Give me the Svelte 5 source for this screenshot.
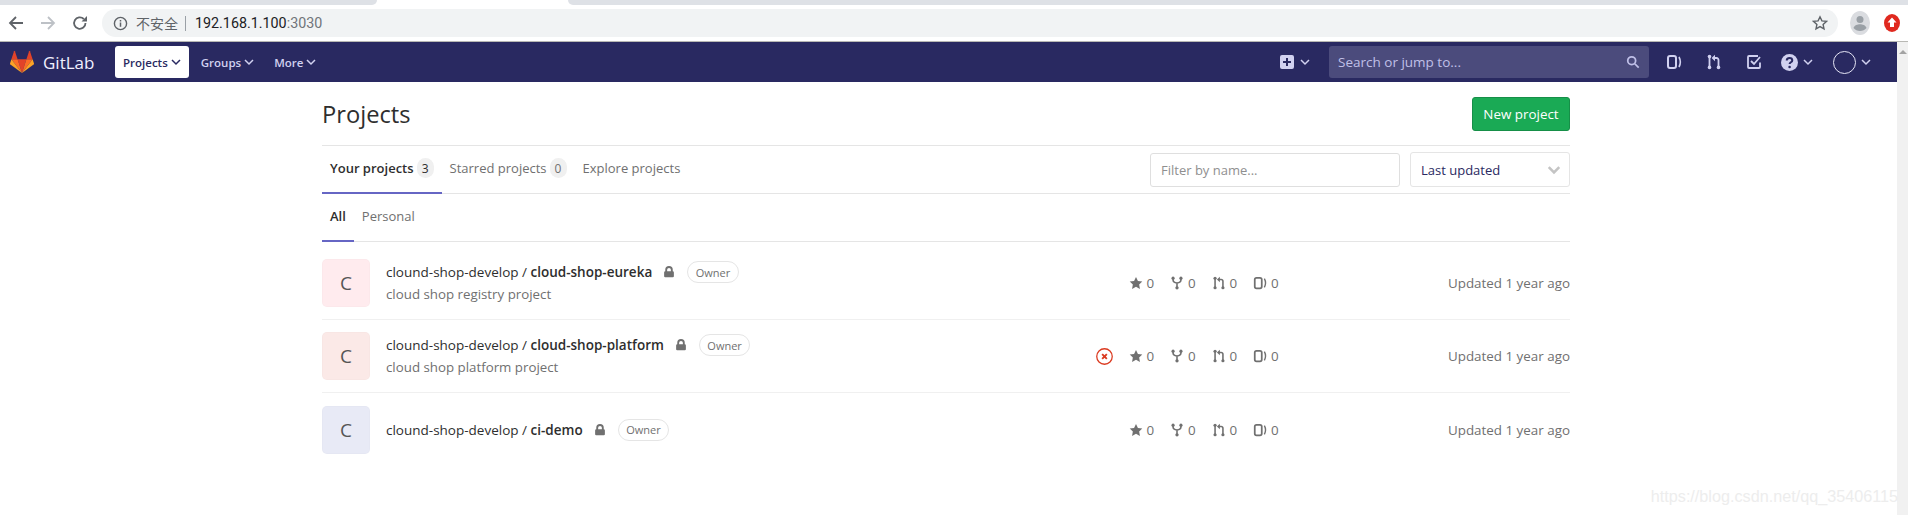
<script>
  const projects = [
    { name: 'cloud-shop-eureka', desc: 'cloud shop registry project', tint: 'pink' },
    { name: 'cloud-shop-platform', desc: 'cloud shop platform project', tint: 'rose', failed: true },
    { name: 'ci-demo', desc: '', tint: 'indigo' }
  ];
</script>

{#snippet chevron()}
  <svg class="chev" viewBox="0 0 10 10"><path d="M1 3l4 4 4-4" fill="none" stroke="currentColor" stroke-width="1.500" /></svg>
{/snippet}

{#snippet issuesIcon()}
  <svg class="icon" viewBox="0 0 16 16" fill="none" stroke="currentColor" stroke-width="2">
    <rect x="2" y="2" width="8" height="12" rx="2" />
    <path d="M13 3c1.600 3 1.600 7 0 10" stroke-width="1.600" />
  </svg>
{/snippet}

{#snippet mrIcon()}
  <svg class="icon" viewBox="0 0 16 16" fill="none" stroke="currentColor" stroke-width="1.800">
    <path d="M3.500 3v10M12.500 13V6c0-1.200-.8-2-2-2H8" />
    <path d="M9 .8 5.600 4 9 7.200z" fill="currentColor" stroke="none" />
    <circle cx="3.500" cy="2.600" r="1.800" fill="currentColor" stroke="none" />
    <circle cx="3.500" cy="13.400" r="1.800" fill="currentColor" stroke="none" />
    <circle cx="12.500" cy="13.400" r="1.800" fill="currentColor" stroke="none" />
  </svg>
{/snippet}

{#snippet forkIcon()}
  <svg class="icon" viewBox="0 0 16 16" fill="none" stroke="currentColor" stroke-width="1.800">
    <path d="M3.500 2.500v2c0 2 1.500 3 4.500 3.500 3-.5 4.500-1.500 4.500-3.500v-2M8 8v5" />
    <circle cx="3.500" cy="2.500" r="1.800" fill="currentColor" stroke="none" />
    <circle cx="12.500" cy="2.500" r="1.800" fill="currentColor" stroke="none" />
    <circle cx="8" cy="13.500" r="1.900" fill="currentColor" stroke="none" />
  </svg>
{/snippet}

<div class="screen">
  <div class="tabstrip">
    <div class="tab-gray left"></div>
    <div class="tab-open"></div>
    <div class="tab-gray right"></div>
  </div>

  <div class="toolbar">
    <svg class="tool" viewBox="0 0 16 16" fill="none" stroke="#5f6368" stroke-width="1.800"><path d="M15 8H2M8 2 2 8l6 6" /></svg>
    <svg class="tool" viewBox="0 0 16 16" fill="none" stroke="#bdc1c6" stroke-width="1.800"><path d="M1 8h13M8 2l6 6-6 6" /></svg>
    <svg class="tool" viewBox="0 0 16 16" fill="none" stroke="#5f6368" stroke-width="1.800"><path d="M13.500 8a5.700 5.700 0 1 1-1.700-4" /><path d="M15 1v5.500H9.500z" fill="#5f6368" stroke="none" /></svg>
    <div class="omnibox">
      <svg class="info" viewBox="0 0 16 16"><circle cx="8" cy="8" r="6.500" fill="none" stroke="#5f6368" stroke-width="1.500" /><path d="M7.200 7h1.600v4.500H7.200zM7.200 4.200h1.600v1.600H7.200z" fill="#5f6368" /></svg>
      <span class="insecure">不安全</span>
      <span class="sep"></span>
      <span class="url">192.168.1.100<span class="port">:3030</span></span>
      <svg class="bookmark" viewBox="0 0 16 16"><path d="M8 1.800l1.900 4.100 4.500.5-3.300 3 .9 4.500L8 11.600l-4 2.300.9-4.500-3.300-3 4.500-.5z" fill="none" stroke="#5f6368" stroke-width="1.400" /></svg>
    </div>
    <svg class="profile" viewBox="0 0 20 24"><ellipse cx="10" cy="12" rx="10" ry="12" fill="#dadce0" /><circle cx="10" cy="8.500" r="3.500" fill="#9aa0a6" /><path d="M3.500 17c1-3 4-3.800 6.500-3.800s5.500.8 6.500 3.800c-1.500 2-4 3-6.500 3s-5-1-6.500-3z" fill="#9aa0a6" /></svg>
    <svg class="ext" viewBox="0 0 16 18"><ellipse cx="8" cy="9" rx="8" ry="9" fill="#e0291f" /><path d="M8 3.500 12.500 8.500H10V13H6V8.500H3.500z" fill="#fff" /></svg>
  </div>

  <div class="viewport">
    <div class="page">
      <nav class="navbar">
        <svg class="logo" viewBox="0 0 36 36">
          <path d="M18 34.380 24.630 13.990H11.370z" fill="#e24329" />
          <path d="M18 34.380 11.370 13.990H2.080z" fill="#fc6d26" />
          <path d="M2.080 14 .06 20.190a1.380 1.380 0 0 0 .5 1.540L18 34.380z" fill="#fca326" />
          <path d="M2.080 14h9.290L7.380 1.720a.69.69 0 0 0-1.310 0z" fill="#e24329" />
          <path d="M18 34.380 24.630 13.990H33.920z" fill="#fc6d26" />
          <path d="M33.920 14l2.020 6.190a1.380 1.380 0 0 1-.5 1.540L18 34.380z" fill="#fca326" />
          <path d="M33.920 14h-9.290l3.990-12.280a.69.69 0 0 1 1.310 0z" fill="#e24329" />
        </svg>
        <span class="brand">GitLab</span>
        <div class="menu">
          <span class="menu-item active">Projects {@render chevron()}</span>
          <span class="menu-item">Groups {@render chevron()}</span>
          <span class="menu-item">More {@render chevron()}</span>
        </div>
        <div class="nav-right">
          <span class="nav-icon plus">
            <svg class="icon" viewBox="0 0 16 16"><path fill-rule="evenodd" d="M3 1h10a2 2 0 0 1 2 2v10a2 2 0 0 1-2 2H3a2 2 0 0 1-2-2V3a2 2 0 0 1 2-2zm4 3v3H4v2h3v3h2V9h3V7H9V4z" fill="currentColor" /></svg>
            {@render chevron()}
          </span>
          <div class="search">
            <span>Search or jump to...</span>
            <svg class="icon" viewBox="0 0 16 16" fill="none" stroke="currentColor" stroke-width="2"><circle cx="6.500" cy="6.500" r="4.500" /><path d="M10 10l4.500 4.500" /></svg>
          </div>
          <span class="nav-icon issues">{@render issuesIcon()}</span>
          <span class="nav-icon mr">{@render mrIcon()}</span>
          <span class="nav-icon todo">
            <svg class="icon" viewBox="0 0 16 16" fill="none" stroke="currentColor" stroke-width="1.800"><path d="M14 8.500V13a1 1 0 0 1-1 1H3a1 1 0 0 1-1-1V3a1 1 0 0 1 1-1h9" /><path d="M5 7l3 3 6-7" /></svg>
          </span>
          <span class="nav-icon help">
            <svg class="help-icon" viewBox="0 0 16 16"><circle cx="8" cy="8" r="8" fill="currentColor" /><path d="M5.400 6.200c0-1.500 1.100-2.400 2.600-2.400s2.600.9 2.600 2.200c0 1.800-2.500 1.800-2.500 3.500" fill="none" stroke="#292961" stroke-width="1.900" /><circle cx="8.100" cy="12.200" r="1.200" fill="#292961" /></svg>
            {@render chevron()}
          </span>
          <span class="nav-icon user">
            <span class="user-circle"></span>
            {@render chevron()}
          </span>
        </div>
      </nav>

      <main class="content">
        <header class="head">
          <h1>Projects</h1>
          <span class="btn-new">New project</span>
        </header>

        <div class="tabs">
          <span class="tab current">Your projects <span class="count">3</span></span>
          <span class="tab">Starred projects <span class="count">0</span></span>
          <span class="tab">Explore projects</span>
          <div class="filters">
            <input class="filter" placeholder="Filter by name..." />
            <div class="sort">
              <span>Last updated</span>
              <svg viewBox="0 0 12 12"><path d="M1.500 3.500 6 8l4.500-4.500" fill="none" stroke="#c4c4c4" stroke-width="2.200" /></svg>
            </div>
          </div>
        </div>

        <div class="subtabs">
          <span class="subtab current">All</span>
          <span class="subtab">Personal</span>
        </div>

        <ul class="list">
          {#each projects as p}
            <li class="row">
              <div class="avatar {p.tint}">C</div>
              <div class="info-col">
                <div class="title">
                  <span class="path">clound-shop-develop / <b>{p.name}</b></span>
                  <svg class="lock" viewBox="0 0 16 16"><path fill-rule="evenodd" d="M3 7V5a5 5 0 0 1 10 0v2a1.500 1.500 0 0 1 1.500 1.500v5A1.500 1.500 0 0 1 13 15H3a1.500 1.500 0 0 1-1.500-1.500v-5A1.500 1.500 0 0 1 3 7zm2.500 0h5V5a2.500 2.500 0 0 0-5 0z" fill="#707070" /></svg>
                  <span class="role">Owner</span>
                </div>
                {#if p.desc}<div class="desc">{p.desc}</div>{/if}
              </div>
              {#if p.failed}
                <svg class="ci" viewBox="0 0 16 16"><circle cx="8" cy="8" r="7.300" fill="none" stroke="#db3b21" stroke-width="1.200" /><path d="M5.800 5.800l4.400 4.400M10.200 5.800l-4.400 4.400" stroke="#db3b21" stroke-width="1.800" /></svg>
              {/if}
              <div class="stats">
                <span class="stat"><svg class="icon" viewBox="0 0 16 16"><path d="M8 1l2.200 4.600 5 .7-3.600 3.500.9 5L8 12.400l-4.500 2.400.9-5L.8 6.300l5-.7z" fill="currentColor" /></svg> 0</span>
                <span class="stat">{@render forkIcon()} 0</span>
                <span class="stat">{@render mrIcon()} 0</span>
                <span class="stat last">{@render issuesIcon()} 0</span>
              </div>
              <div class="updated">Updated 1 year ago</div>
            </li>
          {/each}
        </ul>
      </main>
    </div>
    <div class="scrollbar"><span class="arrow"></span></div>
  </div>

  <div class="watermark">https://blog.csdn.net/qq_35406115</div>
</div>

<style>
  :global(body) {
    margin: 0;
    background: #fff;
  }

  .screen {
    position: relative;
    width: 1908px;
    height: 515px;
    overflow: hidden;
    display: flex;
    flex-direction: column;
    font-family: "Open Sans", "Noto Sans CJK SC", sans-serif;
    color: #2e2e2e;
  }

  .tabstrip {
    display: flex;
    height: 5px;
    flex-shrink: 0;
  }

  .tab-gray {
    background: #dee1e6;
  }

  .tab-gray.left {
    width: 377px;
    border-bottom-right-radius: 5px;
  }

  .tab-open {
    width: 191px;
  }

  .tab-gray.right {
    flex: 1;
    border-bottom-left-radius: 5px;
  }

  .toolbar {
    height: 36px;
    flex-shrink: 0;
    display: flex;
    align-items: center;
    padding-left: 8px;
    border-bottom: 1px solid #b8b8b4;
  }

  .tool {
    width: 16px;
    height: 16px;
    margin-right: 16px;
    flex-shrink: 0;
  }

  .omnibox {
    width: 1736px;
    margin-left: -2px;
    height: 28px;
    box-sizing: border-box;
    background: #f1f3f4;
    border-radius: 14px;
    display: flex;
    align-items: center;
    padding: 0 10px 0 11px;
    font-family: Roboto, "Noto Sans CJK SC", sans-serif;
    font-size: 14.300px;
  }

  .info {
    width: 15px;
    height: 15px;
    margin-right: 8px;
  }

  .insecure {
    color: #5f6368;
    font-size: 14px;
  }

  .sep {
    width: 1px;
    height: 15px;
    background: #9aa0a6;
    margin: 0 9px 0 7px;
  }

  .url {
    color: #202124;
  }

  .port {
    color: #70757a;
  }

  .bookmark {
    width: 16px;
    height: 16px;
    margin-left: auto;
  }

  .profile {
    width: 20px;
    height: 24px;
    margin-left: 12px;
  }

  .ext {
    width: 16px;
    height: 18px;
    margin-left: 14px;
  }

  .viewport {
    flex: 1;
    display: flex;
    min-height: 0;
  }

  .page {
    flex: 1;
    min-width: 0;
  }

  .scrollbar {
    width: 11px;
    background: #f1f1f1;
    display: flex;
    justify-content: center;
    align-items: flex-start;
    padding-top: 8px;
    box-sizing: border-box;
  }

  .arrow {
    width: 0;
    height: 0;
    border: 4px solid transparent;
    border-top: 0;
    border-bottom: 4px solid #a3a3a3;
  }

  .navbar {
    height: 40px;
    background: #292961;
    display: flex;
    align-items: center;
    padding-left: 10px;
    color: #d1d1f0;
  }

  .logo {
    width: 24px;
    height: 24px;
    margin-right: 9px;
  }

  .brand {
    font-size: 17px;
    color: #f0f0ff;
    width: 72px;
  }

  .menu {
    display: flex;
    align-items: center;
  }

  .menu-item {
    display: flex;
    align-items: center;
    gap: 3px;
    height: 32px;
    padding: 0 8px;
    font-size: 11.500px;
    font-weight: 600;
    border-radius: 3px;
    margin-right: 4px;
    color: #d1d1f0;
  }

  .menu-item.active {
    background: #fff;
    color: #292961;
  }

  .chev {
    width: 10px;
    height: 10px;
    flex-shrink: 0;
  }

  .icon {
    width: 16px;
    height: 16px;
    flex-shrink: 0;
  }

  .nav-right {
    margin-left: auto;
    display: flex;
    align-items: center;
    padding-right: 26px;
  }

  .nav-icon {
    display: flex;
    align-items: center;
    gap: 5px;
  }

  .plus {
    margin-right: 19px;
  }

  .search {
    width: 320px;
    height: 32px;
    box-sizing: border-box;
    background: #4b4b7c;
    border-radius: 3px;
    display: flex;
    align-items: center;
    justify-content: space-between;
    padding: 0 9px;
    font-size: 13.500px;
    color: #c0c0e8;
    margin-right: 17px;
  }

  .search .icon {
    width: 14px;
    height: 14px;
  }

  .issues,
  .mr {
    margin-right: 24px;
  }

  .todo {
    margin-right: 19px;
  }

  .help {
    margin-right: 20px;
  }

  .help-icon {
    width: 17px;
    height: 17px;
  }

  .user-circle {
    width: 23px;
    height: 23px;
    border-radius: 50%;
    border: 1px solid #e5e5f5;
    box-sizing: border-box;
  }

  .content {
    width: 1248px;
    margin-left: 322px;
  }

  .head {
    height: 64px;
    box-sizing: border-box;
    border-bottom: 1px solid #e5e5e5;
    display: flex;
    justify-content: space-between;
    align-items: flex-start;
    padding-top: 15px;
  }

  h1 {
    margin: 0;
    font-size: 23.700px;
    font-weight: 500;
    line-height: 34px;
    color: #2e2e2e;
  }

  .btn-new {
    width: 98px;
    height: 34px;
    box-sizing: border-box;
    display: flex;
    align-items: center;
    justify-content: center;
    background: #1aaa55;
    border: 1px solid #168f48;
    border-radius: 3px;
    color: #fff;
    font-size: 13.400px;
  }

  .tabs {
    height: 48px;
    box-sizing: border-box;
    border-bottom: 1px solid #e5e5e5;
    display: flex;
    align-items: stretch;
  }

  .tab {
    display: flex;
    align-items: center;
    gap: 3px;
    padding: 0 8px 2px;
    font-size: 13px;
    color: #707070;
    margin-bottom: -1px;
    box-sizing: border-box;
    border-bottom: 2px solid transparent;
  }

  .tab.current {
    color: #2e2e2e;
    font-weight: 600;
    border-bottom-color: #6666c4;
  }

  .count {
    width: 17px;
    height: 20px;
    border-radius: 9px;
    background: #f0f0f0;
    font-size: 12px;
    font-weight: 400;
    display: flex;
    align-items: center;
    justify-content: center;
    color: #707070;
  }

  .tab.current .count {
    color: #2e2e2e;
  }

  .filters {
    margin-left: auto;
    display: flex;
    align-items: flex-end;
    gap: 10px;
    padding-top: 6px;
    height: 35px;
  }

  .filter {
    width: 250px;
    height: 34px;
    box-sizing: border-box;
    border: 1px solid #dfdfdf;
    border-radius: 3px;
    padding: 0 10px;
    font-family: inherit;
    font-size: 13px;
    outline: none;
  }

  .filter::placeholder {
    color: #8f8f8f;
  }

  .sort {
    width: 160px;
    height: 35px;
    box-sizing: border-box;
    border: 1px solid #e5e5e5;
    border-radius: 3px;
    padding: 0 8px 0 10px;
    display: flex;
    align-items: center;
    justify-content: space-between;
    font-size: 13px;
    color: #292961;
  }

  .sort svg {
    width: 14px;
    height: 14px;
  }

  .subtabs {
    height: 48px;
    box-sizing: border-box;
    border-bottom: 1px solid #e5e5e5;
    display: flex;
  }

  .subtab {
    display: flex;
    align-items: center;
    padding: 0 8px 2px;
    font-size: 13px;
    color: #707070;
    margin-bottom: -1px;
    box-sizing: border-box;
    border-bottom: 2px solid transparent;
  }

  .subtab.current {
    color: #2e2e2e;
    font-weight: 600;
    border-bottom-color: #6666c4;
  }

  .list {
    list-style: none;
    margin: 0;
    padding: 5px 0 0;
  }

  .row {
    height: 73px;
    box-sizing: border-box;
    display: flex;
    align-items: center;
    border-bottom: 1px solid #f0f0f0;
  }

  .row:last-child {
    border-bottom: 0;
  }

  .avatar {
    width: 48px;
    height: 48px;
    box-sizing: border-box;
    border-radius: 5px;
    border: 1px solid rgba(0, 0, 0, 0.012);
    display: flex;
    align-items: center;
    justify-content: center;
    font-size: 19px;
    color: #555;
    margin-right: 16px;
    flex-shrink: 0;
  }

  .avatar.pink {
    background: #ffebee;
  }

  .avatar.rose {
    background: #fbe9e7;
  }

  .avatar.indigo {
    background: #e8eaf6;
  }

  .info-col {
    flex: 1;
    min-width: 0;
  }

  .title {
    display: flex;
    align-items: center;
    height: 22px;
    font-size: 13.500px;
  }

  .path {
    color: #2e2e2e;
  }

  .path b {
    font-weight: 600;
  }

  .lock {
    width: 12px;
    height: 12px;
    margin: 0 12px 0 11px;
  }

  .role {
    height: 22px;
    box-sizing: border-box;
    border: 1px solid #e5e5e5;
    border-radius: 11px;
    padding: 0 7.500px;
    font-size: 11px;
    color: #707070;
    display: flex;
    align-items: center;
  }

  .desc {
    font-size: 13.300px;
    color: #707070;
    line-height: 22px;
  }

  .ci {
    width: 17px;
    height: 17px;
    margin-right: 16px;
  }

  .stats {
    display: flex;
    color: #707070;
    font-size: 13.400px;
  }

  .stat {
    width: 41.500px;
    display: flex;
    align-items: center;
    gap: 4px;
  }

  .stat .icon {
    width: 14px;
    height: 14px;
  }

  .stat.last {
    width: 26px;
  }

  .updated {
    width: 291px;
    text-align: right;
    font-size: 13.400px;
    color: #707070;
  }

  .watermark {
    position: absolute;
    right: 10px;
    bottom: 9px;
    font-family: "Liberation Sans", sans-serif;
    font-size: 16.200px;
    color: #ededed;
  }
</style>
